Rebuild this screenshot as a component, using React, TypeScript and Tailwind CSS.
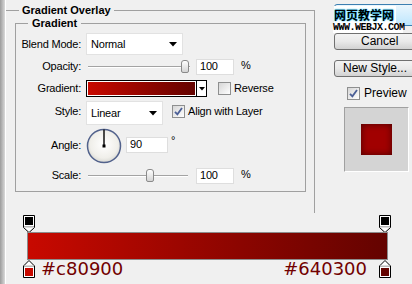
import React from "react"

const Arrow = () => (
  <svg width="8" height="5" viewBox="0 0 8 5">
    <path d="M0 0H8L4 4.5Z" fill="#000" />
  </svg>
)

const Check = ({ checked }: { checked?: boolean }) => (
  <span className="w-[13px] h-[13px] border border-[#8e8f8f] bg-linear-to-br from-[#d6d6d6] to-[#ffffff] flex items-center justify-center shrink-0">
    {checked && (
      <svg width="9" height="9" viewBox="0 0 9 9">
        <path d="M1 4.8L3.4 7.4L8 1" stroke="#4b5f96" strokeWidth="1.8" fill="none" />
      </svg>
    )}
  </span>
)

type SliderProps = { track: string; thumb: string }
const Slider = ({ track, thumb }: SliderProps) => (
  <div className={`relative h-[14px] shrink-0 ${track}`}>
    <div className="absolute left-0 right-0 top-[6px] h-[2px] border-t border-[#a3a3a3] border-b border-b-white" />
    <div className={`absolute top-0 w-[8px] h-[13px] rounded-t-[3px] rounded-b-[2px] border border-[#8a8a8a] bg-linear-to-b from-[#ffffff] to-[#d4d4d4] ${thumb}`} />
  </div>
)

const Field = ({ value, w }: { value: string; w: string }) => (
  <div className={`h-[16px] bg-white border border-[#dedede] flex items-center pl-[3px] shrink-0 ${w}`}>{value}</div>
)

const TopStop = () => (
  <svg width="12" height="18" viewBox="0 0 12 18">
    <path d="M0.5 0.5H11.5V12.5L6 17.5L0.5 12.5Z" fill="#fff" stroke="#000" />
    <rect x="2" y="2" width="8" height="8" fill="#000" />
    <rect x="1" y="11" width="10" height="1.5" fill="#b8b8b8" />
  </svg>
)

const BottomStop = ({ color }: { color: string }) => (
  <svg width="12" height="18" viewBox="0 0 12 18">
    <path d="M6 0.5L11.5 6V17.5H0.5V6Z" fill="#fff" stroke="#000" />
    <rect x="1" y="5.5" width="10" height="1.5" fill="#b8b8b8" />
    <rect x="2" y="8" width="8" height="8" fill={color} />
  </svg>
)

const Dial = () => (
  <svg width="36" height="36" viewBox="0 0 36 36" className="shrink-0">
    <defs>
      <radialGradient id="dialbg" cx="50%" cy="45%" r="55%">
        <stop offset="0%" stopColor="#ffffff" />
        <stop offset="75%" stopColor="#f0efea" />
        <stop offset="100%" stopColor="#d9d9d4" />
      </radialGradient>
    </defs>
    <circle cx="18" cy="18" r="16.5" fill="url(#dialbg)" stroke="#52628c" strokeWidth="1.5" />
    <line x1="18" y1="18" x2="18" y2="1.5" stroke="#000" strokeWidth="1.4" />
    <rect x="16.5" y="16.5" width="3" height="3" fill="#000" />
  </svg>
)

const btn =
  "h-[17px] w-[84px] border border-[#707070] rounded-[3px] bg-linear-to-b from-[#f3f3f3] via-[#e9e9e9] to-[#d2d2d2] text-[12px] leading-[15px] pl-[8px] shrink-0"

const App = () => {
  return (
    <div className="w-[412px] h-[284px] bg-[#f0f0f0] flex overflow-hidden font-['Liberation_Sans',Arial,sans-serif] text-[11px] text-black">
      <div className="w-[5px] h-full shrink-0 bg-linear-to-r from-[#9c9c9c] to-[#dadada] border-r border-white box-content" />
      <div className="flex flex-col flex-1">
        <div className="flex h-[213px] shrink-0">
          {/* Gradient Overlay group */}
          <fieldset className="mt-[4px] h-[209px] w-[309px] shrink-0 border-0 border-t border-r border-[#a0a0a0]">
            <legend className="ml-[13px] px-[3px] font-bold leading-[13px]">Gradient Overlay</legend>
            <div className="pl-[9px]">
              <fieldset className="h-[175px] w-[291px] border border-[#a0a0a0] tracking-[-0.2px]">
                <legend className="ml-[12px] px-[4px] font-bold leading-[13px] tracking-normal">Gradient</legend>

                <div className="flex items-center h-[22px] mt-[3px]">
                  <span className="w-[65px] text-right shrink-0">Blend Mode:</span>
                  <div className="ml-[5px] w-[97px] h-[22px] bg-white border border-[#e2e2e2] flex items-center justify-between pl-[4px] pr-[5px]">
                    <span>Normal</span>
                    <Arrow />
                  </div>
                </div>

                <div className="flex items-center h-[17px] mt-[3px]">
                  <span className="w-[65px] text-right shrink-0">Opacity:</span>
                  <div className="ml-[7px]">
                    <Slider track="w-[102px]" thumb="left-[93px]" />
                  </div>
                  <div className="ml-[6px]">
                    <Field value="100" w="w-[38px]" />
                  </div>
                  <span className="ml-[7px] -mt-[3px]">%</span>
                </div>

                <div className="flex items-center h-[17px] mt-[5px]">
                  <span className="w-[65px] text-right shrink-0">Gradient:</span>
                  <div className="ml-[5px] w-[121px] h-[17px] border border-black bg-white flex shrink-0">
                    <div className="m-[1px] flex-1 bg-linear-to-r from-[#c80900] to-[#640300]" />
                    <div className="w-[10px] border-l border-black flex items-center justify-center">
                      <svg width="6" height="4" viewBox="0 0 6 4">
                        <path d="M0 0H6L3 3.5Z" fill="#000" />
                      </svg>
                    </div>
                  </div>
                  <div className="ml-[11px]">
                    <Check />
                  </div>
                  <span className="ml-[3px]">Reverse</span>
                </div>

                <div className="flex items-center h-[24px] mt-[4px]">
                  <span className="w-[65px] text-right shrink-0 -mt-[4px]">Style:</span>
                  <div className="ml-[5px] w-[77px] h-[24px] bg-white border border-[#e2e2e2] flex items-center justify-between pl-[4px] pr-[5px] shrink-0">
                    <span>Linear</span>
                    <Arrow />
                  </div>
                  <div className="ml-[9px] -mt-[4px]">
                    <Check checked />
                  </div>
                  <span className="ml-[3px] -mt-[4px]">Align with Layer</span>
                </div>

                <div className="flex items-center h-[35px] mt-[3px]">
                  <span className="w-[65px] text-right shrink-0">Angle:</span>
                  <div className="ml-[5px]">
                    <Dial />
                  </div>
                  <div className="ml-[4px] -mt-[2px]">
                    <Field value="90" w="w-[42px]" />
                  </div>
                  <span className="ml-[3px] -mt-[10px]">°</span>
                </div>

                <div className="flex items-center h-[17px] mt-[4px]">
                  <span className="w-[65px] text-right shrink-0">Scale:</span>
                  <div className="ml-[7px]">
                    <Slider track="w-[100px]" thumb="left-[58px]" />
                  </div>
                  <div className="ml-[8px]">
                    <Field value="100" w="w-[38px]" />
                  </div>
                  <span className="ml-[7px] -mt-[3px]">%</span>
                </div>
              </fieldset>
            </div>
          </fieldset>

          {/* buttons */}
          <div className="flex flex-col pl-[19px] pt-[4px] shrink-0">
            <div className="relative h-[22px] w-[84px] shrink-0">
              <div className="h-[22px] w-[84px] border border-[#3c7fb1] rounded-[3px] bg-linear-to-b from-[#eaf6fd] to-[#bee6fd]" />
              <div className="absolute left-0 top-[2px] w-[62px] h-[17px] bg-white flex items-center whitespace-nowrap overflow-hidden font-['Noto_Sans_CJK_SC',sans-serif] text-[12px] leading-[15px] font-bold text-black [text-shadow:0_0_2px_#19c3ff,0_0_1px_#19c3ff]">
                网页教学网
              </div>
              <div className="absolute -left-[1px] top-[19px] w-[70px] h-[10px] bg-white whitespace-nowrap font-['Liberation_Mono',monospace] font-bold text-[10px] leading-[10px] tracking-[-0.5px] text-black">
                WWW.WEBJX.COM
              </div>
            </div>
            <div className={`${btn} mt-[7px] pl-[26px]`}>Cancel</div>
            <div className={`${btn} mt-[10px]`}>New Style...</div>
            <div className="flex items-center mt-[10px] ml-[13px] h-[12px]">
              <Check checked />
              <span className="ml-[4px] text-[12px]">Preview</span>
            </div>
            <div className="mt-[8px] ml-[10px] w-[65px] h-[65px] bg-[#d4d4d4] border border-[#a0a0a0] border-r-white border-b-white flex items-center justify-center">
              <div className="w-[31px] h-[31px] bg-[#a10000] shadow-[inset_0_0_7px_#4a0000]" />
            </div>
          </div>
        </div>

        {/* gradient editor */}
        <div className="pl-[17px] flex flex-col">
          <div className="flex justify-between w-[368px] mt-[2px] h-[18px]">
            <TopStop />
            <TopStop />
          </div>
          <div className="ml-[4px] w-[361px] h-[28px] -mt-[1px] border border-[#8c8c8c] bg-linear-to-r from-[#c80900] to-[#640300]" />
          <div className="flex items-start w-[368px]">
            <BottomStop color="#c80900" />
            <span className="ml-[6px] -mt-[2px] font-['DejaVu_Sans',sans-serif] text-[18px] leading-[22px] text-[#720000]">#c80900</span>
            <span className="ml-auto -mt-[2px] font-['DejaVu_Sans',sans-serif] text-[18px] leading-[22px] text-[#720000]">#640300</span>
            <div className="ml-[12px]">
              <BottomStop color="#640300" />
            </div>
          </div>
        </div>
      </div>
    </div>
  )
}

export default App
